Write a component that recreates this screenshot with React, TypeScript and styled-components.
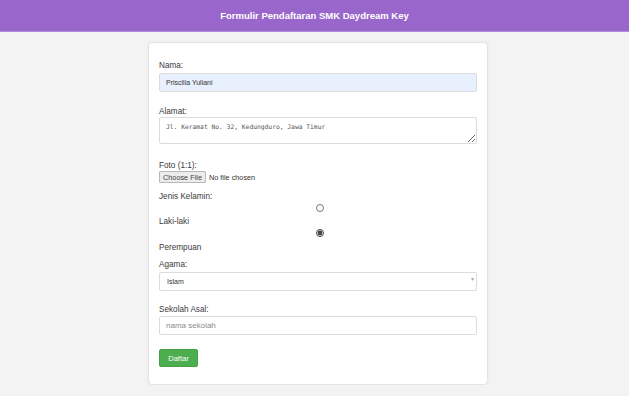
import styled, { createGlobalStyle } from "styled-components"

const GlobalStyle = createGlobalStyle`
body{
    margin: 0;
    background: #f3f3f3;
    font-family: "Liberation Sans", Arial, sans-serif;
}
`

export default function App() {
    return (
        <>
            <GlobalStyle />
            <Header>Formulir Pendaftaran SMK Daydream Key</Header>
            <Page>
                <Card>
                    <Label $mb={1}>Nama:</Label>
                    <TextInput defaultValue="Priscilia Yuliani" $autofill $mb={14} />

                    <Label $mb={-1}>Alamat:</Label>
                    <TextArea defaultValue="Jl. Keramat No. 32, Kedungduro, Jawa Timur" spellCheck />

                    <Label $mb={-1}>Foto (1:1):</Label>
                    <FileInput type="file" />

                    <Label $mb={1}>Jenis Kelamin:</Label>
                    <Radio type="radio" name="jk" $mb={4} />
                    <Label $mb={1}>Laki-laki</Label>
                    <Radio type="radio" name="jk" defaultChecked $mb={5} />
                    <Label $mb={5}>Perempuan</Label>

                    <Label $mb={-1}>Agama:</Label>
                    <SelectWrap>
                        <Select defaultValue="Islam">
                            <option>Islam</option>
                            <option>Kristen</option>
                            <option>Katolik</option>
                            <option>Hindu</option>
                            <option>Buddha</option>
                        </Select>
                        <Caret>▾</Caret>
                    </SelectWrap>

                    <Label $mb={0}>Sekolah Asal:</Label>
                    <TextInput placeholder="nama sekolah" $mb={14} />

                    <Button>Daftar</Button>
                </Card>
            </Page>
        </>
    )
}

const Header = styled.div`
height: 31px;
background: #9966cc;
border-bottom: 1px solid #b28ce0;
color: #ffffff;
font-size: 9.5px;
font-weight: bold;
display: flex;
align-items: center;
justify-content: center;
`

const Page = styled.div`
padding: 10px 0 0 7px;
`

const Card = styled.form`
width: 340px;
box-sizing: border-box;
margin: 0 auto;
padding: 17px 10px 17px;
background: #ffffff;
border: 1px solid #e4e4e4;
border-radius: 4px;
box-shadow: 0 0 3px rgba(0,0,0,0.06);
display: flex;
flex-direction: column;
align-items: stretch;
`

const Label = styled.label<{ $mb?: number }>`
display: block;
font-size: 8.2px;
line-height: 12px;
color: #3a3a3a;
margin-bottom: ${p => p.$mb ?? 2}px;
`

const TextInput = styled.input<{ $autofill?: boolean; $mb?: number }>`
box-sizing: border-box;
width: 100%;
height: 19px;
margin: 0 0 ${p => p.$mb ?? 0}px;
padding: 0 6px;
font-family: "Liberation Sans", Arial, sans-serif;
font-size: 7px;
color: #333333;
background: ${p => p.$autofill ? "#e8f0fe" : "#ffffff"};
border: 1px solid #dcdcdc;
border-radius: 2px;
outline: none;
&::placeholder{
    font-size: 8px;
    color: #8a8a8a;
}
`

const TextArea = styled.textarea`
box-sizing: border-box;
width: 100%;
height: 27px;
margin: 0 0 16px;
padding: 5px 6px;
font-family: "DejaVu Sans Mono", monospace;
font-size: 6.3px;
color: #555555;
border: 1px solid #dcdcdc;
border-radius: 2px;
resize: vertical;
outline: none;
`

const FileInput = styled.input`
height: 12px;
margin: 0 0 8px;
font-family: "Liberation Sans", Arial, sans-serif;
font-size: 7.3px;
color: #333333;
&::file-selector-button{
    font-family: "Liberation Sans", Arial, sans-serif;
    font-size: 7.3px;
    height: 12px;
    padding: 0 3px;
    margin-right: 3px;
    background: #ececec;
    border: 1px solid #b8b8b8;
    border-radius: 1px;
    color: #444444;
}
`

const Radio = styled.input<{ $mb?: number }>`
display: block;
width: 8px;
height: 8px;
margin: 0 0 ${p => p.$mb ?? 3}px calc(50% - 2.5px);
accent-color: #444444;
`

const SelectWrap = styled.div`
position: relative;
margin: 0 0 13px;
`

const Select = styled.select`
box-sizing: border-box;
width: 100%;
height: 19px;
padding: 0 7px;
appearance: none;
font-family: "Liberation Sans", Arial, sans-serif;
font-size: 7px;
color: #333333;
background: #ffffff;
border: 1px solid #dcdcdc;
border-radius: 2px;
outline: none;
`

const Caret = styled.span`
position: absolute;
right: 3px;
top: 5px;
font-size: 6px;
color: #aaaaaa;
pointer-events: none;
`

const Button = styled.button`
align-self: flex-start;
width: 39px;
height: 18px;
padding: 0;
background: #4cae4f;
border: 1px solid #43a047;
border-radius: 2px;
color: #ffffff;
font-family: "Liberation Sans", Arial, sans-serif;
font-size: 7.5px;
cursor: pointer;
`
